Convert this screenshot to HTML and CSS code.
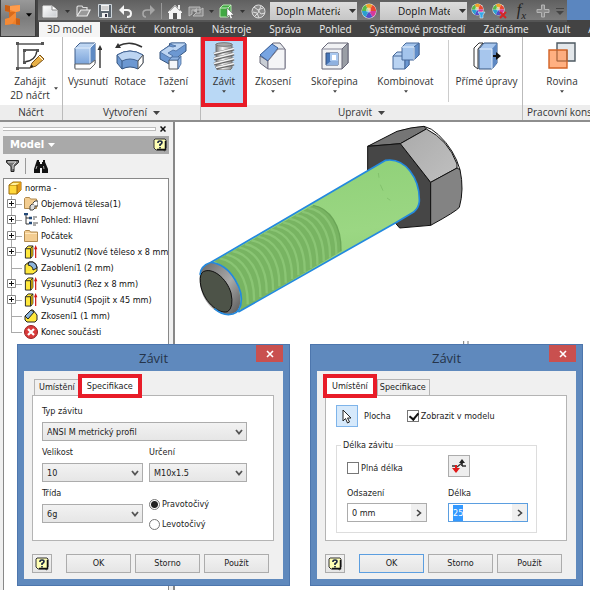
FILE: index.html
```html
<!DOCTYPE html>
<html lang="cs">
<head>
<meta charset="utf-8">
<title>norma - Závit</title>
<link rel="stylesheet" href="styles.css">
</head>
<body>
<svg class="defs" aria-hidden="true">
  <defs>
    <linearGradient id="blue" x1="0" y1="0" x2="0" y2="1"><stop offset="0" stop-color="#c5dbf5"/><stop offset="1" stop-color="#6d9ad6"/></linearGradient>
    <linearGradient id="steel" x1="0" y1="0" x2="1" y2="0"><stop offset="0" stop-color="#777"/><stop offset=".4" stop-color="#f4f4f4"/><stop offset="1" stop-color="#888"/></linearGradient>
    <linearGradient id="paper" x1="0" y1="0" x2="1" y2="1"><stop offset="0" stop-color="#fff"/><stop offset="1" stop-color="#c9ccd0"/></linearGradient>
  </defs>
  <symbol id="caret" viewBox="0 0 7 4"><path d="M0 0h7L3.500 4z"/></symbol>
  <symbol id="chevron" viewBox="0 0 8 6"><path d="M1 1l3 3.500L7 1" fill="none" stroke="#555" stroke-width="1.800"/></symbol>
  <symbol id="close" viewBox="0 0 8 8"><path d="M1 1l6 6M7 1L1 7" stroke="#fff" stroke-width="1.600"/></symbol>
  <symbol id="help" viewBox="0 0 14 14"><path d="M2 1h10l1 1v8l-1 1v2l-2-1H3l-2-2V2z" fill="#ffffb4" stroke="#333"/><path d="M12.500 3v8.500H4" fill="none" stroke="#111" stroke-width="1.500"/><path d="M5 5V4q0-1 2-1t2 1.500Q9 6 7 6.500V8M7 9v1.500" fill="none" stroke="#16233f" stroke-width="1.600"/></symbol>
  <symbol id="wheel" viewBox="0 0 16 16"><circle cx="8" cy="8" r="7.500" fill="#eee"/><path d="M8 8L4.500 2a7 7 0 0 1 7 0z" fill="#f0a028"/><path d="M8 8l3.500-6A7 7 0 0 1 15 8z" fill="#e84830"/><path d="M8 8h7a7 7 0 0 1-3.500 6z" fill="#d63a9c"/><path d="M8 8l3.500 6a7 7 0 0 1-7 0z" fill="#5050c8"/><path d="M8 8l-3.500 6A7 7 0 0 1 1 8z" fill="#2aa0cf"/><path d="M8 8H1a7 7 0 0 1 3.500-6z" fill="#59b947"/><circle cx="7.500" cy="7" r="2.500" fill="#fff" opacity=".5"/></symbol>
  <symbol id="extrusion" viewBox="0 0 14 15"><path d="M1 4l3-3h5v10l-2 3H1z" fill="#ffe83c" stroke="#222"/><path d="M1 4h5.500v10M6.500 4L9 1" fill="none" stroke="#222"/><path d="M7 4l2-2v9l-2 2z" fill="#b99a0c"/><path d="M12 14V3" stroke="#d01818" stroke-width="1.300"/><path d="M10.200 4.500L12 0l1.800 4.500z" fill="#d01818"/></symbol>
  <symbol id="folder" viewBox="0 0 14 14"><path d="M.5 12.500v-10l1-1h4l1 1.500h7v9.500z" fill="#f3cd91" stroke="#b08a50"/><path d="M1 4.500h12" stroke="#ffe7bd"/></symbol>
  <symbol id="plus" viewBox="0 0 9 9"><path d="M.5.5h8v8h-8z" fill="#fff" stroke="#888"/><path d="M2 4.500h5M4.500 2v5" stroke="#111"/></symbol>
</svg>

<header class="app-header">
  <button class="app-button" aria-label="Inventor">
    <svg width="16" height="24" viewBox="0 0 16 24"><path d="M0 2l5 1 10-1v6l-4 1v6l4 1v6l-8-1-7 1v-6l4-1V9L0 8z" fill="#f07f26"/><path d="M0 2l5 1v6L0 8zM11 15l4 1v6l-4-.500z" fill="#c85f16"/><path d="M5 3l10-1v6l-4 1-6-2z" fill="#ff9c4c"/><path d="M4 9l7 0v6l-7 0z" fill="#d96a1b"/><path d="M4 15l7-6v6l-4 6-7 1v-6z" fill="#f58a35"/></svg>
    <svg width="6" height="4"><use href="#caret"/></svg>
  </button>
  <div class="quick-row">
    <div class="quick-bar">
      <button aria-label="Nový"><svg width="16" height="14" viewBox="0 0 16 14"><path d="M1 2h9l5 4v7H1z" fill="url(#paper)" stroke="#e8e8e8"/><path d="M10 2v4h5" fill="#fff" stroke="#888"/></svg></button>
      <button aria-label="Možnosti nového souboru"><svg class="dim" width="5" height="3"><use href="#caret"/></svg></button>
      <button aria-label="Otevřít"><svg width="15" height="12" viewBox="0 0 15 12"><path d="M1 10V2l1-1h4l1 1.500h4V5" fill="#777" stroke="#ddd" stroke-width="1.200"/><path d="M1 11l4-6h9l-3 6z" fill="#999" stroke="#ececec" stroke-width="1.200"/></svg></button>
      <button aria-label="Uložit"><svg width="14" height="14" viewBox="0 0 14 14"><path d="M.5.5h13v13h-12l-1-1z" fill="#5d6770" stroke="#cdd4da"/><path d="M3 1h8v6H3z" fill="#f4f4f4"/><path d="M4 9h6v5H4z" fill="#eee"/><path d="M7 10h2v3H7z" fill="#334"/><path d="M3.500 3h7M3.500 5h7" stroke="#aaa"/></svg></button>
      <button aria-label="Zpět"><svg width="14" height="14" viewBox="0 0 14 14"><path d="M2 6h6q4 0 4 3.500T8 13" fill="none" stroke="#f5f5f5" stroke-width="2"/><path d="M0 6l5-5v10z" fill="#f5f5f5"/></svg></button>
      <button aria-label="Znovu"><svg width="14" height="14" viewBox="0 0 14 14"><path d="M12 6H6Q2 6 2 9.500T5 13" fill="none" stroke="#aaa" stroke-width="1.600"/><path d="M14 6L9 1v10z" fill="#a4a4a4"/></svg></button>
      <span class="quick-sep"></span>
      <button aria-label="Domů"><svg width="14" height="15" viewBox="0 0 14 15"><path d="M0 8l7-7 7 7v1h-1v6H1V9H0z" fill="#f4f4f4"/><path d="M11 1v4" stroke="#eee" stroke-width="2"/><path d="M5 9h4v6H5z" fill="#555"/><path d="M2 7l5-5 5 5" fill="none" stroke="#aaa"/></svg></button>
      <button aria-label="Aktualizovat"><svg width="16" height="13" viewBox="0 0 16 13"><path d="M1 2h11v3H4v4l-3 2zM15 11H5l3-3h4V5l3-2z" fill="#8b8b8b" stroke="#bbb"/><path d="M5 6l4-3v5z" fill="#bbb"/></svg></button>
      <button aria-label="Možnosti aktualizace"><svg class="dim" width="5" height="3"><use href="#caret"/></svg></button>
      <button aria-label="Výběr"><svg width="15" height="15" viewBox="0 0 15 15"><path d="M1 4l3-3h8v9l-3 3H1z" fill="#41a843" stroke="#b6e6b0"/><path d="M1 4h8v9M9 4l3-3" fill="none" stroke="#c9f0c4"/><path d="M8 4v9l2-2 1.500 4 2-1-1.500-3H15z" fill="#fff" stroke="#555" stroke-width=".5"/></svg></button>
      <button aria-label="Možnosti výběru"><svg class="dim" width="5" height="3"><use href="#caret"/></svg></button>
      <button aria-label="Vzhled"><svg width="15" height="15" viewBox="0 0 15 15"><circle cx="7.500" cy="7.500" r="6.500" fill="#898989" stroke="#ddd"/><path d="M3 3l4 3 5-2M2 8l4 1 2 5M7 6l3 4 4-1M4 12l3-3 3-7" fill="none" stroke="#ddd"/></svg></button>
      <label class="quick-combo"><select aria-label="Materiál"><option>DopIn Materiál</option></select><svg width="7" height="4"><use href="#caret"/></svg></label>
      <button aria-label="Barvy"><svg width="16" height="16"><use href="#wheel"/></svg></button>
      <label class="quick-combo look"><select aria-label="Vzhled materiálu"><option>DopIn Materiál</option></select><svg width="7" height="4"><use href="#caret"/></svg></label>
      <button aria-label="Upravit vzhled"><svg width="16" height="16" viewBox="0 0 16 16"><use href="#wheel" width="13" height="13"/><path d="M7 9h7l-2 3v3h-3v-3z" fill="#35a7e8" stroke="#fff" stroke-width=".5"/></svg></button>
      <button aria-label="Vymazat vzhled"><svg width="16" height="16" viewBox="0 0 16 16"><use href="#wheel" width="13" height="13"/><path d="M8 9l6 6M14 9l-6 6" stroke="#d62424" stroke-width="2"/></svg></button>
      <button class="fx" aria-label="Parametry"><i>f<sub>x</sub></i></button>
      <button aria-label="Přidat"><svg width="14" height="14" viewBox="0 0 14 14"><path d="M5.500 1h3v4.500H13v3H8.500V13h-3V8.500H1v-3h4.500z" fill="#8c8c8c" stroke="#b4b4b4"/></svg></button>
      <button aria-label="Přizpůsobit"><svg width="8" height="7" viewBox="0 0 8 7"><path d="M0 0h8v1H0zM0 3h8L4 7z" fill="#444"/></svg></button>
    </div>
  </div>
  <nav class="ribbon-tabs">
    <a class="active" href="#">3D model</a><a href="#">Náčrt</a><a href="#">Kontrola</a><a href="#">Nástroje</a><a href="#">Správa</a><a href="#">Pohled</a><a href="#">Systémové prostředí</a><a href="#">Začínáme</a><a href="#">Vault</a><a href="#">Autodesk</a>
  </nav>
</header>

<section class="ribbon">
  <div class="group sketch">
    <div class="tools">
      <button class="tool"><svg width="28" height="28" viewBox="0 0 28 28"><path d="M2 2h24M2 2v24h12" fill="none" stroke="#555" stroke-width="1.300"/><path d="M8 8h14M8 8v12q12-1 13-12" fill="none" stroke="#333" stroke-width="1.300"/><path d="M0 0h3v3H0zM25 0h3v3h-3zM0 25h3v3H0zM7 7h3v3H7zM20 7h3v3h-3zM7 19h3v3H7z" fill="#555"/><path d="M14 26l2-5 8-8 4 4-8 7z" fill="#e8b045" stroke="#795018"/><path d="M23 14l4 4" stroke="#fff"/><path d="M14 26l1.500-3.500 2 2z" fill="#222"/></svg><span>Zahájit<br>2D náčrt</span></button>
      <svg class="side-caret" width="4" height="3"><use href="#caret"/></svg>
    </div>
    <h2>Náčrt</h2>
  </div>
  <div class="group create">
    <div class="tools">
      <button class="tool"><svg width="28" height="28" viewBox="0 0 28 28"><path d="M1 6l5-5h15v20l-5 5H1z" fill="url(#blue)" stroke="#3d5d8a"/><path d="M16 6l5-5v20l-5 5z" fill="#5e8ac4"/><path d="M1 6h15v20M16 6l5-5" fill="none" stroke="#e2eefc"/><path d="M1 22h15l5-4v4l-5 5H1z" fill="#fff" stroke="#666"/><path d="M26 26V7" stroke="#333" stroke-width="1.400"/><path d="M23.500 8L26 3l2.500 5z" fill="#333"/></svg><span>Vysunutí</span></button>
      <button class="tool"><svg width="30" height="28" viewBox="0 0 30 28"><path d="M3 4Q15-2 27 5" fill="none" stroke="#333" stroke-width="1.500"/><path d="M0 6l3-5 3 5z" fill="#333"/><path d="M2 13q13-8 26 0v8l-5 6q-8-4-16 0l-5-6z" fill="#6c98d2" stroke="#34547f"/><path d="M2 13q13-8 26 0l-5 6q-8-4-16 0z" fill="#bdd5f2" stroke="#446594"/><path d="M28 13v8l-5 6v-8z" fill="#fff" stroke="#555"/><path d="M7 19v8" stroke="#34547f"/></svg><span>Rotace</span></button>
      <button class="tool"><svg width="28" height="28" viewBox="0 0 28 28"><path d="M1 10L11 3l-1-1 2-1h14l1 1v7l-8 6v4l-9 3-9-5z" fill="#6c98d2" stroke="#34547f"/><path d="M1 10l9-6 4 1 3-1-6-2 2-1h13l1 1-10 7-3-1-5 3 5 3-3 2z" fill="#bdd5f2" stroke="#486c9f" stroke-width=".8"/><path d="M10 18h9v9h-9z" fill="#f4f6f9" stroke="#555"/><path d="M10 18l3-3h8l-2 3zM19 18l3-4v8l-3 5z" fill="#8fb3e2" stroke="#486c9f" stroke-width=".8"/></svg><span>Tažení</span><svg width="4" height="3"><use href="#caret"/></svg></button>
    </div>
    <h2>Vytvoření <svg width="7" height="4"><use href="#caret"/></svg></h2>
  </div>
  <div class="group modify">
    <div class="tools">
      <button class="tool current"><svg width="22" height="28" viewBox="0 0 22 28"><path d="M3 2h16v24l-2 2H5l-2-2z" fill="url(#steel)" stroke="#777"/><ellipse cx="11" cy="2.500" rx="8" ry="1.800" fill="#aaa" stroke="#777"/><path d="M1 12l20-5M1 17l20-5M1 22l20-5M3 26l18-4" stroke="#666" stroke-width="3"/><path d="M1 11.500l20-5M1 16.500l20-5M1 21.500l20-5M3 25.500l18-4" stroke="#f3f3f3" stroke-width="1.500"/></svg><span>Závit</span><svg width="4" height="3"><use href="#caret"/></svg></button>
      <button class="tool"><svg width="28" height="28" viewBox="0 0 28 28"><path d="M1 14L14 1h7l5 6v19H9z" fill="#e5e8ec" stroke="#667"/><path d="M1 14l8 5v8l-8-6z" fill="#c9ced5" stroke="#667"/><path d="M1 13L13 2l6 4L9 19z" fill="#78a5e2" stroke="#385e98"/><path d="M9 19L19 7h7v20H9z" fill="#f4f5f7" stroke="#778"/></svg><span>Zkosení</span><svg width="4" height="3"><use href="#caret"/></svg></button>
      <button class="tool"><svg width="28" height="28" viewBox="0 0 28 28"><path d="M1 7l6-6h20v20l-6 6H1z" fill="#f1f2f4" stroke="#667"/><path d="M21 7l6-6v20l-6 6z" fill="#9a9ea5" stroke="#667"/><path d="M1 7h20" stroke="#889"/><path d="M5 11h12v12H5z" fill="#4575b7" stroke="#36517c"/><path d="M9 11h8v8H9z" fill="#a9c8ef"/><path d="M11 13h4v5h-4z" fill="#fff"/><path d="M5 23l5-4h7v4z" fill="#8fb1df"/></svg><span>Skořepina</span><svg width="4" height="3"><use href="#caret"/></svg></button>
      <button class="tool"><svg width="28" height="28" viewBox="0 0 28 28"><g stroke="#46699a" fill="#b9d3f2"><path d="M1 14l4-4h12v13l-4 4H1z"/><path d="M1 14h12v13M13 14l4-4" fill="none"/><path d="M13 14l4-4v13l-4 4z" fill="#6c98d2"/><path d="M10 5l4-4h13v12l-5 5H10z" fill="#a3c4ec"/><path d="M22 5l5-4v12l-5 5z" fill="#608dc9"/></g><path d="M10 5h12v13" fill="none" stroke="#e5f0fd"/></svg><span>Kombinovat</span><svg width="4" height="3"><use href="#caret"/></svg></button>
      <button class="tool direct"><svg width="28" height="28" viewBox="0 0 28 28"><path d="M1 6l5-5h4L5 7v20l-4-3z" fill="#fff" stroke="#333"/><path d="M6 7l5-6h13v20l-5 6H6z" fill="#a7c6ed" stroke="#34547f"/><path d="M19 7l5-6v20l-5 6z" fill="#5d88c3"/><path d="M6 7h13v20" fill="none" stroke="#e3effd"/><path d="M20 14h5" stroke="#111" stroke-width="2"/><path d="M23 10l5 4-5 4z" fill="#111"/></svg><span>Přímé úpravy</span></button>
    </div>
    <h2>Upravit <svg width="7" height="4"><use href="#caret"/></svg></h2>
  </div>
  <div class="group work">
    <div class="tools">
      <button class="tool"><svg width="28" height="28" viewBox="0 0 28 28"><path d="M9 1h18v18H9z" fill="#e3e7ea" stroke="#4d5961" stroke-width="1.400"/><path d="M1 8h18v18H1z" fill="#ffa570" fill-opacity=".88" stroke="#d26325" stroke-width="1.400"/><path d="M9 8v11h10V8" fill="none" stroke="#9f603b"/></svg><span>Rovina</span><svg width="4" height="3"><use href="#caret"/></svg></button>
    </div>
    <h2>Pracovní konstrukce</h2>
  </div>
</section>

<main class="workspace">
  <aside class="browser">
    <div class="grip"><span></span><button aria-label="Zavřít panel"><svg width="6" height="6" viewBox="0 0 6 6"><path d="M.5.5l5 5M5.500.5l-5 5" stroke="#111" stroke-width="1.500"/></svg></button></div>
    <div class="browser-title"><button>Model <svg width="7" height="4"><use href="#caret"/></svg></button><button aria-label="Nápověda"><svg width="14" height="14"><use href="#help"/></svg></button></div>
    <div class="browser-tools">
      <button aria-label="Filtr"><svg width="13" height="12" viewBox="0 0 13 12"><path d="M.5.5h12v2L8 6.500v5H5v-5L.5 2.500z" fill="#777" stroke="#222"/><path d="M2 2h8L7 5v4" fill="none" stroke="#ddd"/></svg></button>
      <button aria-label="Najít"><svg width="14" height="13" viewBox="0 0 14 13"><path d="M3 0h2v2h1v2h2V2h1V0h2v2l3 7v4H8V8H6v5H0V9l2-6z" fill="#111"/><path d="M2 9l1-3M10 9l-.500-3" stroke="#aaa"/></svg></button>
    </div>
    <ul class="tree">
      <li class="root"><svg width="14" height="14" viewBox="0 0 14 14"><path d="M1 4l4-3h8v8l-4 4H1z" fill="#ffd83a" stroke="#9b6a0c"/><path d="M9 4l4-3v8l-4 4z" fill="#e39a18"/><path d="M1 4h8v9" fill="none" stroke="#9b6a0c"/><path d="M2 4l3-2h6L8 4z" fill="#fff1a0"/></svg>norma -</li>
      <li><button aria-label="Rozbalit"><svg width="9" height="9"><use href="#plus"/></svg></button><svg width="14" height="14" viewBox="0 0 14 14"><path d="M.5 11.500v-10l1-1h4l1 1.500h6v9.500z" fill="#f3cd91" stroke="#b08a50"/><path d="M6 9l2-2h3v4l-2 2H6z" fill="#ddd" stroke="#444"/><path d="M9 6l2-2h3v5h-3" fill="#fff" stroke="#444"/></svg>Objemová tělesa(1)</li>
      <li><button aria-label="Rozbalit"><svg width="9" height="9"><use href="#plus"/></svg></button><svg width="14" height="14" viewBox="0 0 14 14"><path d="M2 2v9h3M2 5h3" fill="none" stroke="#333"/><path d="M0 1h4M5 5h3M5 10h3" stroke="#234978" stroke-width="2.500"/><path d="M9 4h4M9 6h2M9 10h5M9 12h3" stroke="#555"/></svg>Pohled: Hlavní</li>
      <li><button aria-label="Rozbalit"><svg width="9" height="9"><use href="#plus"/></svg></button><svg width="14" height="14"><use href="#folder"/></svg>Počátek</li>
      <li><button aria-label="Rozbalit"><svg width="9" height="9"><use href="#plus"/></svg></button><svg width="14" height="14"><use href="#extrusion"/></svg>Vysunutí2 (Nové těleso x 8 mm)</li>
      <li class="leaf"><svg width="14" height="14" viewBox="0 0 14 14"><path d="M1 4l4-3h4q4 2 4 5v4l-4 3H1z" fill="#ffe83c" stroke="#222"/><path d="M5 1h4q4 2 4 6l-4 2Q9 5 4 4z" fill="#8cb4dc" stroke="#222"/></svg>Zaoblení1 (2 mm)</li>
      <li><button aria-label="Rozbalit"><svg width="9" height="9"><use href="#plus"/></svg></button><svg width="14" height="14"><use href="#extrusion"/></svg>Vysunutí3 (Řez x 8 mm)</li>
      <li><button aria-label="Rozbalit"><svg width="9" height="9"><use href="#plus"/></svg></button><svg width="14" height="14"><use href="#extrusion"/></svg>Vysunutí4 (Spojit x 45 mm)</li>
      <li class="leaf"><svg width="14" height="14" viewBox="0 0 14 14"><path d="M1 7l6-6h2l4 5v5l-2 2H3l-2-2z" fill="#ffe83c" stroke="#222"/><path d="M1 7l6-6 3 2-6 7z" fill="#8cb4dc" stroke="#222"/></svg>Zkosení1 (1 mm)</li>
      <li class="leaf last"><svg width="14" height="14" viewBox="0 0 14 14"><circle cx="7" cy="7" r="6.500" fill="#d93a3a" stroke="#922"/><path d="M4 4l6 6M10 4l-6 6" stroke="#fff" stroke-width="2.200"/></svg>Konec součásti</li>
    </ul>
  </aside>

  <div class="viewport">
    <svg class="bolt" viewBox="0 12 900 666" role="img" aria-label="Šroub se závitem">
      <defs>
        <linearGradient id="head" x1="0" y1="0" x2="1" y2="1"><stop offset="0" stop-color="#aaa"/><stop offset="1" stop-color="#c0c0c0"/></linearGradient>
        <linearGradient id="tip" x1="0" y1="0" x2="1" y2="1"><stop offset="0" stop-color="#666"/><stop offset=".55" stop-color="#aaa"/><stop offset="1" stop-color="#555"/></linearGradient>
        <linearGradient id="shank" x1=".4" y1="0" x2=".6" y2="1"><stop offset="0" stop-color="#8fd078"/><stop offset=".5" stop-color="#9bd783"/><stop offset="1" stop-color="#8aca72"/></linearGradient>
        <clipPath id="thread"><path d="M118 430L414 262C462 270 500 320 498 400L196 578Q212 474 118 430z"/></clipPath>
      </defs>
      <g stroke="#111" stroke-width="3" stroke-linejoin="round">
        <path d="M578 85L666 40Q710 27 747 25L754 33 676 77z" fill="#757575"/>
        <path d="M578 85L676 77 767 193V322L674 330 578 220z" fill="#464646"/>
        <path d="M676 77L754 33Q820 66 846 138V150L767 193z" fill="url(#head)"/>
        <path d="M767 193L846 150 855 155Q868 215 853 268 844 280 767 322z" fill="#838383"/>
        <path d="M747 25Q770 30 790 50Q838 95 855 155" fill="none"/>
      </g>
      <path d="M108 433L578 158 632 127C690 118 735 180 733 250Q731 270 716 282L662 314 190 582Q208 470 108 433z" fill="url(#shank)"/>
      <g clip-path="url(#thread)">
        <path d="M100 240H510V600H100z" fill="#78b462"/>
        <g fill="none" stroke="#8ac574" stroke-width="7">
          <path d="M134 421C182 429 220 479 218 559M153 410C201 418 239 468 237 548M172 399C220 407 258 457 256 537M191 388C239 396 277 446 275 526M210 378C258 386 296 436 294 516M229 367C277 375 315 425 313 505M248 356C296 364 334 414 332 494M267 345C315 353 353 403 351 483M286 334C334 342 372 392 370 472M305 324C353 332 391 382 389 462M324 313C372 321 410 371 408 451M343 302C391 310 429 360 427 440M362 291C410 299 448 349 446 429M381 281C429 289 467 339 465 419M400 270C448 278 486 328 484 408"/>
        </g>
      </g>
      <path d="M414 262C462 270 500 320 498 400" fill="none" stroke="#6ba657" stroke-width="4"/>
      <path d="M610 165l2 14M616 200l8 18M636 240l10 7" stroke="#78b864" stroke-width="2"/>
      <path d="M108 433C170 440 204 510 194 565Q188 588 160 590C110 590 66 530 75 466Q80 443 108 433z" fill="url(#tip)"/>
      <path d="M85 461C112 447 155 480 168 525Q177 568 158 581C130 590 82 548 76 494Q74 466 85 461z" fill="#4d5348" stroke="#111" stroke-width="3"/>
      <g fill="none" stroke="#2389df" stroke-width="5" stroke-linejoin="round">
        <path d="M108 433L578 158 632 127C690 118 735 180 733 250Q731 270 716 282L662 314 190 582"/>
        <path d="M108 433C170 440 208 520 197 562Q190 590 160 590 140 590 118 572M108 433Q76 444 75 470"/>
      </g>
      <path d="M866 669v9M879 669v9" stroke="#777" stroke-width="3"/>
    </svg>
  </div>

  <section class="dialog spec" aria-label="Závit – Specifikace">
    <header><h1>Závit</h1><button class="close" aria-label="Zavřít"><svg width="8" height="8"><use href="#close"/></svg></button></header>
    <div class="dialog-body">
      <div class="tabs"><button class="tab">Umístění</button><button class="tab marked">Specifikace</button></div>
      <div class="page spec-page">
        <label class="full">Typ závitu<span class="combo"><select><option>ANSI M metrický profil</option></select><svg width="8" height="6"><use href="#chevron"/></svg></span></label>
        <label>Velikost<span class="combo"><select><option>10</option></select><svg width="8" height="6"><use href="#chevron"/></svg></span></label>
        <label>Určení<span class="combo"><select><option>M10x1.5</option></select><svg width="8" height="6"><use href="#chevron"/></svg></span></label>
        <label>Třída<span class="combo"><select><option>6g</option></select><svg width="8" height="6"><use href="#chevron"/></svg></span></label>
        <div class="radios">
          <label><input type="radio" name="dir" checked>Pravotočivý</label>
          <label><input type="radio" name="dir">Levotočivý</label>
        </div>
      </div>
      <div class="actions"><button class="help" aria-label="Nápověda"><svg width="14" height="14"><use href="#help"/></svg></button><button>OK</button><button>Storno</button><button>Použít</button></div>
    </div>
  </section>

  <section class="dialog place" aria-label="Závit – Umístění">
    <header><h1>Závit</h1><button class="close" aria-label="Zavřít"><svg width="8" height="8"><use href="#close"/></svg></button></header>
    <div class="dialog-body">
      <div class="tabs"><button class="tab marked">Umístění</button><button class="tab">Specifikace</button></div>
      <div class="page place-page">
        <div class="pick-row">
          <button class="pick" id="face" aria-label="Plocha"><svg width="10" height="15" viewBox="0 0 10 15"><path d="M1 1v11l2.500-2.500 2 4.500 2-1-2-4H9z" fill="#fff" stroke="#222"/></svg></button>
          <label for="face">Plocha</label>
          <label class="check"><input type="checkbox" checked>Zobrazit v modelu</label>
        </div>
        <fieldset>
          <legend>Délka závitu</legend>
          <label class="check"><input type="checkbox">Plná délka</label>
          <button class="flip" aria-label="Obrátit směr"><svg width="16" height="16" viewBox="0 0 16 16"><path d="M1 8h4M6 9l5-4M11 8h4" stroke="#333" stroke-width="1.300"/><path d="M11 8V3" stroke="#222" stroke-width="1.600"/><path d="M8 5l3-4 3 4z" fill="#222"/><path d="M5 7v5" stroke="#e01818" stroke-width="2"/><path d="M1 10h8l-4 5z" fill="#e01818"/></svg></button>
          <label>Odsazení<span class="value"><input type="text" value="0 mm"><button aria-label="Možnosti odsazení"><svg width="6" height="8" viewBox="0 0 6 8"><path d="M1 1l3.500 3L1 7" fill="none" stroke="#444" stroke-width="1.600"/></svg></button></span></label>
          <label>Délka<span class="value focused"><input id="length" type="text" value="25" autofocus><button aria-label="Možnosti délky"><svg width="6" height="8" viewBox="0 0 6 8"><path d="M1 1l3.500 3L1 7" fill="none" stroke="#444" stroke-width="1.600"/></svg></button></span></label>
        </fieldset>
      </div>
      <div class="actions"><button class="help" aria-label="Nápověda"><svg width="14" height="14"><use href="#help"/></svg></button><button class="default">OK</button><button>Storno</button><button>Použít</button></div>
    </div>
  </section>
</main>
<script src="script.js"></script>
</body>
</html>
```
FILE: styles.css
```css
* { box-sizing: border-box; }

body {
  margin: 0;
  min-height: 100vh;
  display: flex;
  flex-direction: column;
  overflow: hidden;
  background: #fff;
  color: #1c1c1c;
  font-family: "Open Sans", "Noto Sans", sans-serif;
  font-size: 10px;
  line-height: 16px;
}

button, input, select {
  margin: 0;
  padding: 0;
  border: 0;
  border-radius: 0;
  background: none;
  color: inherit;
  font: inherit;
}

select { appearance: none; }
svg { display: block; flex: none; }
h1, h2 { margin: 0; font-weight: 400; }
.defs { position: absolute; width: 0; height: 0; }

/* Header */
.app-header {
  display: grid;
  grid-template-columns: 38px minmax(0, 1fr);
  grid-template-rows: 22px 15px;
  background: #434343;
}

.app-button {
  grid-row: 1 / 3;
  display: flex;
  align-items: center;
  justify-content: center;
  gap: 5px;
  margin-right: 2px;
  padding-bottom: 6px;
  border: 1px solid #3a3a3a;
  border-top: 0;
  background: linear-gradient(#999, #7c7c7c 50%, #929292);
}

.quick-row { background: linear-gradient(#5b86bf 20px, #434343 20px); }

.quick-bar {
  display: grid;
  grid-template-columns: 23px 12px 21px 21px 22px 21px 6px 21px 22px 8px 22px 10px 23px 88px 22px 88px 21px 22px 21px 21px 14px;
  width: max-content;
  height: 22px;
  background: linear-gradient(#606060, #7c7c7c 20px, #555 20px);
}

.quick-bar > button { display: grid; place-items: center; overflow: hidden; }
.dim { fill: #333; }
.quick-sep { width: 1px; margin: 3px 3px; background: #999; }

.quick-combo {
  position: relative;
  margin: 2px 1px 2px 0;
  background: linear-gradient(#dcdcdc, #c6c6c6);
}
.quick-combo select { width: 70px; height: 17px; padding-left: 6px; overflow: hidden; text-overflow: clip; color: #111; }
.quick-combo.look select { padding-left: 18px; }
.quick-combo svg { position: absolute; right: 1px; top: 7px; fill: #333; }
.fx { color: #222; font: 16px/16px "Liberation Serif", serif; }
.fx sub { font-size: 11px; line-height: 8px; }

.ribbon-tabs { display: flex; gap: 18px; overflow: hidden; line-height: 14px; }
.ribbon-tabs a { color: #eee; text-decoration: none; white-space: nowrap; }
.ribbon-tabs .active { margin: 0 -8px 0 1px; padding: 0 8px; background: #f5f5f5; color: #333; }

/* Ribbon */
.ribbon {
  display: grid;
  grid-template-columns: 63px 138px 322px minmax(0, 1fr);
  height: 85px;
  border-bottom: 2px solid #8e8e8e;
  color: #333;
}
.ribbon use { fill: #444; }

.group { display: flex; flex-direction: column; min-width: 0; overflow: hidden; border-right: 1px solid #bbb; }
.work { border-right: 0; }
.group h2 {
  display: flex;
  align-items: center;
  justify-content: center;
  gap: 6px;
  height: 15px;
  background: #ededed;
  font-size: 10px;
  line-height: 15px;
  white-space: nowrap;
}
.work h2 { justify-content: flex-start; padding-left: 4px; }
.tools { display: flex; flex: 1; }

.tool {
  display: flex;
  flex-direction: column;
  align-items: center;
  flex: none;
  padding-top: 5px;
  line-height: 14px;
  white-space: nowrap;
}
.tool span { margin: 4px 0 2px; }
.sketch .tool { width: 56px; margin-left: 2px; }
.side-caret { margin-top: 50px; margin-left: -4px; }
.create .tools { padding-left: 2px; }
.create .tool { width: 46px; }
.create .tool + .tool { width: 38px; }
.create .tool:last-child { width: 48px; }
.modify .tool { width: 71px; }
.modify .tool.current { position: relative; width: 46px; background: linear-gradient(90deg, #fff 4px, #b9d8f5 4px, #b9d8f5 42px, #fff 42px); }
.modify .tool.current::after { content: ""; position: absolute; inset: 0 0 -2px; border: 4px solid #e81c28; }
.modify .tool.current + .tool { width: 52px; }
.modify .tool.direct { width: 76px; margin: 3px 0 3px 7px; padding-top: 2px; border-left: 1px solid #ccc; }
.work .tool { width: 78px; }

/* Model browser */
.workspace { position: relative; display: flex; flex: 1; min-height: 468px; }

.browser {
  display: flex;
  flex-direction: column;
  flex: none;
  width: 175px;
  padding: 0 4px 0 3px;
  border-right: 2px solid #888;
  background: #f0f0f0;
}
.grip { display: flex; align-items: center; gap: 4px; height: 14px; }
.grip span { flex: 1; height: 4px; border: solid #bbb; border-width: 1px 1px 1px 0; background: #fff; }
.grip button { padding: 0 3px 0 0; }
.browser-title {
  display: flex;
  align-items: center;
  justify-content: space-between;
  height: 18px;
  padding: 0 2px 0 7px;
  background: #a9a9a9;
  color: #fff;
  font: bold 10px/18px "DejaVu Sans", sans-serif;
}
.browser-title button { display: flex; align-items: center; gap: 4px; }
.browser-title svg { fill: #fff; }
.browser-tools { display: flex; align-items: center; height: 24px; padding: 0 3px; }
.browser-tools button + button { height: 16px; margin-left: 6px; padding-left: 8px; border-left: 1px solid #999; }

.tree {
  flex: 1;
  margin: 0;
  padding: 1px 0;
  overflow: hidden;
  border: 1px solid #888;
  border-bottom: 0;
  background: #fff;
  color: #111;
  font: 9px/16px "DejaVu Sans Condensed", "DejaVu Sans", sans-serif;
  list-style: none;
}
.tree li {
  position: relative;
  display: flex;
  align-items: center;
  gap: 3px;
  height: 16px;
  padding-left: 20px;
  white-space: nowrap;
}
.tree .root { padding-left: 4px; }
.tree li:not(.root)::before { content: ""; position: absolute; left: 7px; top: 0; width: 10px; height: 8px; border: solid #aaa; border-width: 0 0 1px 1px; }
.tree li:not(.root, .last)::after { content: ""; position: absolute; left: 7px; top: 8px; height: 8px; border-left: 1px solid #aaa; }
.tree li button { position: absolute; left: 3px; top: 3px; z-index: 1; }

.viewport { flex: 1; min-width: 0; overflow: hidden; background: #fff; }
.bolt { width: 300px; height: 222px; }

/* Dialogs */
.dialog {
  position: absolute;
  top: 222px;
  width: 273px;
  padding: 0 6px 6px;
  border: 1px solid #4d76ad;
  background: #5f89bd;
  font-family: "DejaVu Sans Condensed", "DejaVu Sans", sans-serif;
  font-size: 9px;
}
.spec { left: 17px; }
.place { left: 310px; }
.dialog > header { display: flex; justify-content: center; height: 26px; }
.dialog h1 { flex: 1; padding-left: 27px; color: #25344a; font: 13px/26px "Open Sans", "Noto Sans", sans-serif; text-align: center; }
.close { display: grid; place-items: center; width: 27px; height: 17px; background: #c9504f; }

.dialog-body { padding: 0 9px 6px 8px; background: #f0f0f0; }
.tabs { display: flex; align-items: flex-end; height: 24px; padding-left: 2px; }
.tab { height: 16px; padding: 0 4px; border: 1px solid #b4b4b4; border-bottom: 0; line-height: 15px; }
.tab.marked {
  position: relative;
  z-index: 1;
  height: 24px;
  margin: 0 0 -3px -2px;
  padding: 0 5px;
  border: 4px solid #e81c28;
  background: #fff;
}
.tab.marked:first-child { margin-left: -4px; }
.tab.marked + .tab { padding: 0 3px 0 2px; }
.page { height: 146px; border: 1px solid #b4b4b4; background: #fff; }

.spec-page { display: grid; grid-template-columns: 101px 98px; column-gap: 6px; align-content: start; padding: 7px 9px; }
.spec-page > label { height: 41px; }
.spec-page .full { grid-column: 1 / 3; }
.combo { position: relative; display: block; margin-top: 3px; }
.combo select { width: 100%; height: 19px; padding-left: 4px; border: 1px solid #acacac; background: linear-gradient(#f2f2f2, #e6e6e6); }
.combo svg { position: absolute; right: 4px; top: 7px; }
.radios { padding-top: 9px; }
.radios label, .check { display: flex; align-items: center; }
.radios label { height: 20px; gap: 2px; }
.radios input { appearance: none; width: 11px; height: 11px; border: 1px solid #777; border-radius: 50%; background: #fff; }
.radios input:checked { background: radial-gradient(circle, #222 3px, #fff 4px); }

.actions { display: flex; gap: 4px; margin-top: 13px; }
.actions button { width: 65px; height: 19px; border: 1px solid #acacac; background: linear-gradient(#f2f2f2, #e5e5e5); line-height: 17px; }
.actions .help { display: grid; place-items: center; width: 20px; margin-right: 10px; }
.actions .default { border-color: #5b9ee0; }

.place-page { padding: 9px 10px; }
.pick-row { display: flex; align-items: center; gap: 6px; height: 22px; }
.pick { display: grid; place-items: center; width: 22px; height: 22px; border: 1px solid #7eb4ea; background: #d6e9fb; }
.pick-row .check { margin-left: 10px; }
.check { gap: 2px; }
.check input { appearance: none; width: 12px; height: 12px; border: 1px solid #777; background: #fff; }
.check input:checked::after { content: ""; display: block; width: 4px; height: 7px; margin: 0 0 0 3px; border: solid #111; border-width: 0 2px 2px 0; transform: rotate(40deg); }

fieldset {
  display: grid;
  grid-template-columns: 80px 80px;
  column-gap: 21px;
  align-items: center;
  width: max-content;
  margin: 10px 0 0;
  padding: 2px 8px 10px 10px;
  border: 1px solid #ddd;
}
legend { margin-left: -6px; padding: 0 2px; }
.flip { display: grid; place-items: center; width: 22px; height: 22px; margin-bottom: 8px; border: 1px solid #acacac; background: #eee; }
fieldset .check { margin-bottom: 4px; }
.value { display: flex; height: 19px; margin-top: 2px; border: 1px solid #acacac; background: #fff; }
.value input { flex: 1; width: 0; padding-left: 4px; outline: 0; }
.value button { display: grid; place-items: center; width: 15px; background: #f0f0f0; }
.value.focused { border-color: #5b9ee0; }
.value ::selection { background: #3399ff; color: #fff; }
```
FILE: script.js
```js
document.getElementById("length").select();
```
